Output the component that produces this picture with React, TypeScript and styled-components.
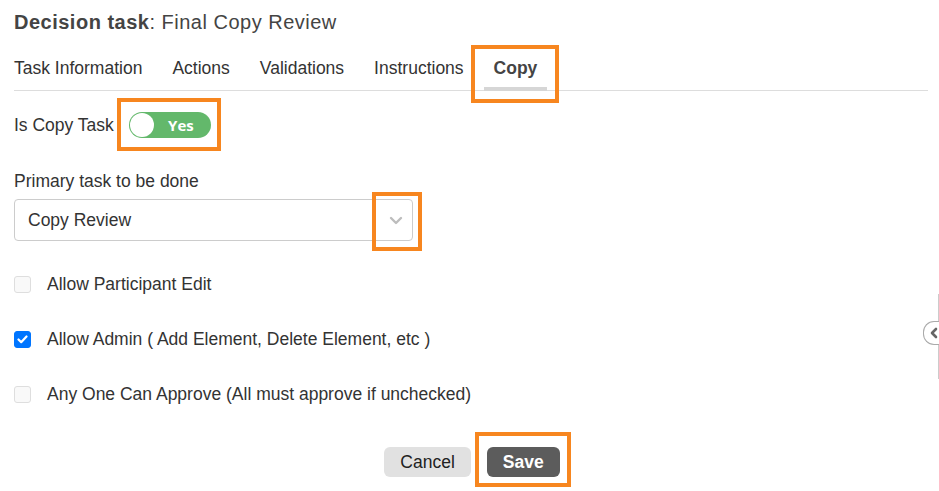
import React, { useState } from 'react';
import styled, { createGlobalStyle } from 'styled-components';

const GlobalStyle = createGlobalStyle`
  html, body {
    margin: 0;
    padding: 0;
    background: #fff;
  }
  body {
    font-family: "Liberation Sans", Arial, sans-serif;
    color: #333;
  }
`;

const Page = styled.div`
  position: relative;
  width: 939px;
  height: 491px;
  padding: 0 11px 0 14px;
  box-sizing: border-box;
  overflow: hidden;
`;

const Title = styled.h1`
  margin: 0 0 12px;
  padding-top: 10px;
  font-size: 20px;
  line-height: 24px;
  font-weight: normal;
  letter-spacing: 0.5px;
  color: #444;
  b {
    font-weight: bold;
  }
`;

const TabBar = styled.div`
  display: flex;
  gap: 30px;
  border-bottom: 1px solid #ddd;
`;

const Tab = styled.div<{ $active?: boolean }>`
  position: relative;
  padding: 12px 0;
  font-size: 17.5px;
  line-height: 20px;
  color: ${(p) => (p.$active ? '#444' : '#333')};
  font-weight: ${(p) => (p.$active ? 'bold' : 'normal')};
  cursor: pointer;
  &::after {
    content: '';
    display: ${(p) => (p.$active ? 'block' : 'none')};
    position: absolute;
    left: -10px;
    right: -10px;
    bottom: -1px;
    height: 4px;
    background: #d6d6d6;
  }
`;

// orange annotation frame drawn over a wrapped element
const Highlight = styled.span<{ $t: number; $r: number; $b: number; $l: number }>`
  position: relative;
  display: inline-flex;
  &::before {
    content: '';
    position: absolute;
    top: ${(p) => -p.$t}px;
    right: ${(p) => -p.$r}px;
    bottom: ${(p) => -p.$b}px;
    left: ${(p) => -p.$l}px;
    border: 4px solid #f7861f;
    pointer-events: none;
    z-index: 2;
  }
`;

const ToggleRow = styled.div`
  display: flex;
  align-items: center;
  gap: 15px;
  margin-top: 21px;
  font-size: 17.5px;
`;

const Toggle = styled.button<{ $on: boolean }>`
  position: relative;
  width: 82px;
  height: 26px;
  border: none;
  border-radius: 13px;
  padding: 0 0 0 22px;
  background: ${(p) => (p.$on ? '#63b86b' : '#ccc')};
  color: #fff;
  font-family: "Open Sans", "Liberation Sans", sans-serif;
  font-weight: bold;
  font-size: 15px;
  cursor: pointer;
  display: flex;
  align-items: center;
  justify-content: center;
  box-sizing: border-box;
`;

const Knob = styled.span`
  position: absolute;
  left: 1px;
  top: 1px;
  width: 24px;
  height: 24px;
  border-radius: 50%;
  background: #fff;
`;

const FieldLabel = styled.div`
  margin-top: 33px;
  font-size: 17.5px;
  line-height: 20px;
`;

const SelectBox = styled.div`
  display: flex;
  align-items: center;
  justify-content: space-between;
  width: 399px;
  height: 42px;
  margin-top: 8px;
  padding: 0 9px 0 13px;
  box-sizing: border-box;
  border: 1px solid #ccc;
  border-radius: 4px;
  font-size: 17.5px;
  color: #333;
`;

const Chevron = styled.svg`
  display: block;
`;

const CheckList = styled.div`
  display: flex;
  flex-direction: column;
  gap: 25px;
  margin-top: 28px;
`;

const CheckRow = styled.label`
  display: flex;
  align-items: center;
  gap: 16px;
  height: 30px;
  font-size: 17.5px;
  color: #333;
  cursor: pointer;
`;

const Box = styled.span<{ $checked: boolean }>`
  width: 17px;
  height: 17px;
  box-sizing: border-box;
  border-radius: 3px;
  border: 1px solid ${(p) => (p.$checked ? '#0075ff' : '#dedede')};
  background: ${(p) => (p.$checked ? '#0075ff' : '#f9f9f9')};
  display: flex;
  align-items: center;
  justify-content: center;
`;

const Actions = styled.div`
  display: flex;
  justify-content: center;
  gap: 16px;
  margin-top: 38px;
  padding-left: 2px;
`;

const Button = styled.button<{ $primary?: boolean }>`
  height: 30px;
  padding: 0 16px;
  border: none;
  border-radius: 6px;
  font-family: "Liberation Sans", Arial, sans-serif;
  font-size: 17.5px;
  font-weight: ${(p) => (p.$primary ? 'bold' : 'normal')};
  background: ${(p) => (p.$primary ? '#5c5c5c' : '#e1e1e1')};
  color: ${(p) => (p.$primary ? '#fff' : '#222')};
  cursor: pointer;
`;

const SideHandle = styled.div`
  position: absolute;
  right: 0;
  top: 294px;
  width: 1px;
  height: 85px;
  background: #ccc;
`;

const HandleKnob = styled.div`
  position: absolute;
  right: 0;
  top: 27px;
  width: 15px;
  height: 22px;
  border: 1px solid #aaa;
  border-right: none;
  border-radius: 11px 0 0 11px;
  background: #fff;
  display: flex;
  align-items: center;
  justify-content: flex-end;
`;

const options = [
  { label: 'Allow Participant Edit', checked: false },
  { label: 'Allow Admin ( Add Element, Delete Element, etc )', checked: true },
  { label: 'Any One Can Approve (All must approve if unchecked)', checked: false },
];

const tabs = ['Task Information', 'Actions', 'Validations', 'Instructions', 'Copy'];

export default function App() {
  const [isCopy, setIsCopy] = useState(true);
  const [checks, setChecks] = useState(options.map((o) => o.checked));

  return (
    <Page>
      <GlobalStyle />
      <Title>
        <b>Decision task</b>: Final Copy Review
      </Title>

      <TabBar>
        {tabs.map((t) =>
          t === 'Copy' ? (
            <Highlight key={t} $t={1} $r={22} $b={13} $l={23}>
              <Tab $active>{t}</Tab>
            </Highlight>
          ) : (
            <Tab key={t}>{t}</Tab>
          )
        )}
      </TabBar>

      <ToggleRow>
        <span>Is Copy Task</span>
        <Highlight $t={14} $r={10} $b={13} $l={12}>
          <Toggle $on={isCopy} onClick={() => setIsCopy(!isCopy)}>
            <Knob />
            {isCopy ? 'Yes' : 'No'}
          </Toggle>
        </Highlight>
      </ToggleRow>

      <FieldLabel>Primary task to be done</FieldLabel>
      <SelectBox>
        <span>Copy Review</span>
        <Highlight $t={24} $r={19} $b={26} $l={17}>
          <Chevron width="14" height="9" viewBox="0 0 14 9">
            <polyline points="2,2 7,7 12,2" fill="none" stroke="#bdbdbd" strokeWidth="2.4" strokeLinecap="round" strokeLinejoin="round" />
          </Chevron>
        </Highlight>
      </SelectBox>

      <CheckList>
        {options.map((o, i) => (
          <CheckRow key={o.label} onClick={() => setChecks(checks.map((c, j) => (j === i ? !c : c)))}>
            <Box $checked={checks[i]}>
              {checks[i] && (
                <svg width="11" height="9" viewBox="0 0 11 9">
                  <polyline points="1.5,4.5 4.2,7.2 9.5,1.5" fill="none" stroke="#fff" strokeWidth="2.2" strokeLinecap="round" strokeLinejoin="round" />
                </svg>
              )}
            </Box>
            <span>{o.label}</span>
          </CheckRow>
        ))}
      </CheckList>

      <Actions>
        <Button>Cancel</Button>
        <Highlight $t={15} $r={11} $b={10} $l={12}>
          <Button $primary>Save</Button>
        </Highlight>
      </Actions>

      <SideHandle>
        <HandleKnob>
          <svg width="10" height="12" viewBox="0 0 10 12">
            <polyline points="7,2 3,6 7,10" fill="none" stroke="#666" strokeWidth="2.6" strokeLinecap="round" strokeLinejoin="round" />
          </svg>
        </HandleKnob>
      </SideHandle>
    </Page>
  );
}
